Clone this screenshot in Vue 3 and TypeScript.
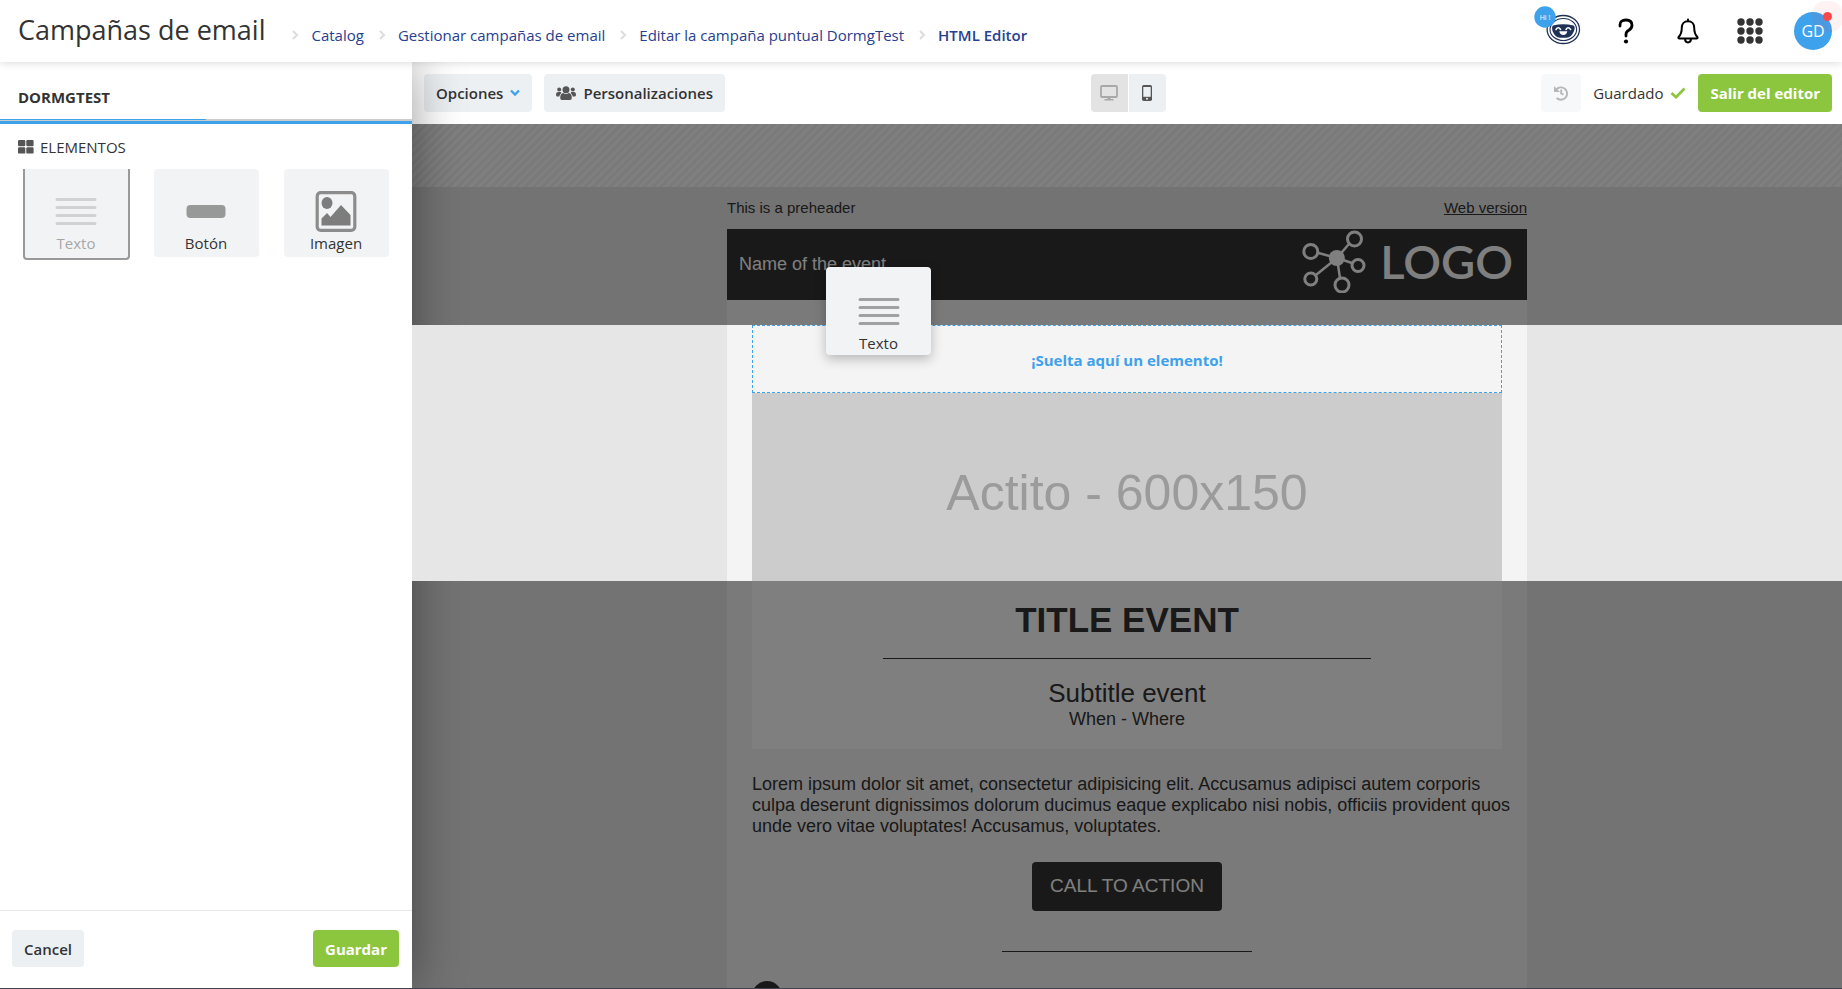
<script setup lang="ts">
interface Crumb { label: string; current?: boolean }
const crumbs: Crumb[] = [
  { label: 'Catalog' },
  { label: 'Gestionar campañas de email' },
  { label: 'Editar la campaña puntual DormgTest' },
  { label: 'HTML Editor', current: true },
]
interface Block { id: string; label: string; dragging?: boolean }
const blocks: Block[] = [
  { id: 'text', label: 'Texto', dragging: true },
  { id: 'button', label: 'Botón' },
  { id: 'image', label: 'Imagen' },
]
const gridDots = [0, 1, 2, 3, 4, 5, 6, 7, 8]
</script>

<template>
  <div class="app">
    <header class="topbar">
      <h1>Campañas de email</h1>
      <nav class="crumbs" aria-label="Ruta">
        <template v-for="c in crumbs" :key="c.label">
          <svg class="sep" viewBox="0 0 8 12" width="8" height="12"><path d="M2 2l4 4-4 4" /></svg>
          <a href="#" :class="{ current: c.current }">{{ c.label }}</a>
        </template>
      </nav>
      <div class="tools">
        <button class="tool bot" type="button" aria-label="Asistente">
          <svg viewBox="0 0 48 50" width="48" height="50">
            <g fill="none" stroke="#1f3157">
              <ellipse cx="30.300" cy="23.500" rx="16.200" ry="14" stroke-width="1.300" />
              <ellipse cx="30.300" cy="23.500" rx="13.300" ry="11" stroke-width="1.100" />
            </g>
            <path d="M20 19.500Q30 17 40.500 19.500 42.500 20.500 41 25 38.500 31.500 33.500 31.800h-6.500Q22 31.500 19.500 25 18.500 20.500 20 19.500z" fill="#1f3157" />
            <path d="M23 23.500q2.200-3.400 4.600 0M33 23.500q2.200-3.400 4.600 0" fill="none" stroke="#fff" stroke-width="1.500" stroke-linecap="round" />
            <path d="M26.300 25.300h8q-.6 3.700-4 3.700t-4-3.700z" fill="#fff" />
            <circle cx="12" cy="11" r="10.700" fill="#3ea1ec" />
            <text x="12" y="14" text-anchor="middle" font-size="7" fill="#fff">Hi !</text>
          </svg>
        </button>
        <button class="tool" type="button" aria-label="Ayuda">
          <svg viewBox="0 0 16 26" width="16" height="26"><path d="M2 8V7q0-5 6-5t6 5.200q0 3-3.200 5Q8 13.800 8 16.200V18" fill="none" stroke="#000" stroke-width="2.800" stroke-linecap="round" stroke-linejoin="round" /><circle cx="8" cy="23.500" r="2.100" /></svg>
        </button>
        <button class="tool" type="button" aria-label="Notificaciones">
          <svg viewBox="0 0 22 26" width="22" height="26"><path d="M11 1.500V3M11 3.200c-4 0-6.200 3-6.200 6.300 0 5.500-1.300 7.500-3 9.200-.8 1-.3 1.800.7 1.800h17c1 0 1.500-.8.700-1.800-1.700-1.700-3-3.700-3-9.200 0-3.300-2.200-6.300-6.200-6.300zM8 21c.2 4.500 5.800 4.500 6 0" fill="none" stroke="#000" stroke-width="2" stroke-linecap="round" stroke-linejoin="round" /></svg>
        </button>
        <button class="tool" type="button" aria-label="Aplicaciones">
          <svg viewBox="0 0 26 26" width="26" height="26" fill="#333"><circle v-for="d in gridDots" :key="d" :cx="4 + (d % 3) * 9" :cy="4 + Math.floor(d / 3) * 9" r="3.700" /></svg>
        </button>
        <button class="avatar" type="button">GD<span class="dot"></span></button>
      </div>
    </header>

    <div class="body">
      <aside class="panel">
        <div class="tab"><h2>DORMGTEST</h2></div>
        <h3>
          <svg viewBox="0 0 16 14" width="16" height="14" fill="#555"><rect width="7.300" height="6.300" rx="1.200" /><rect x="8.300" width="7.300" height="6.300" rx="1.200" /><rect y="7.300" width="7.300" height="6.300" rx="1.200" /><rect x="8.300" y="7.300" width="7.300" height="6.300" rx="1.200" /></svg>
          ELEMENTOS
        </h3>
        <div class="blocks">
          <div v-for="b in blocks" :key="b.id" class="card" :class="{ ghost: b.dragging }">
            <svg viewBox="0 0 42 42" width="42" height="42">
              <path v-if="b.id === 'text'" d="M2 9.500h38M2 17.500h38M2 25.500h38M2 33.500h38" stroke="#a1a1a1" stroke-width="3" stroke-linecap="round" />
              <rect v-else-if="b.id === 'button'" x="1.500" y="15" width="39" height="13" rx="4" fill="#979998" />
              <g v-else>
                <rect x="2.200" y="2.700" width="37.600" height="37.600" rx="3.500" fill="none" stroke="#8c8c8c" stroke-width="3.200" />
                <ellipse cx="12" cy="13" rx="5.500" ry="6" fill="#7d7d7d" />
                <path d="M6.500 35.500v-7l5.500-5.500 3.500 4L26 15l9.500 10V35.500z" fill="#7d7d7d" />
              </g>
            </svg>
            <span>{{ b.label }}</span>
          </div>
        </div>
        <footer class="actions">
          <button class="btn" type="button">Cancel</button>
          <button class="btn primary" type="button">Guardar</button>
        </footer>
      </aside>

      <main class="editor">
        <div class="toolbar">
          <div class="left">
            <button class="btn" type="button">Opciones
              <svg viewBox="0 0 10 8" width="10" height="8"><path d="M1 1.500L5 5.500 9 1.500" fill="none" stroke="#3ea1ec" stroke-width="2.300" /></svg>
            </button>
            <button class="btn" type="button">
              <svg viewBox="0 0 20 14" width="20" height="14" fill="#555"><circle cx="10" cy="3.700" r="3.500" /><circle cx="3.200" cy="3.500" r="2" /><circle cx="16.800" cy="3.500" r="2" /><path d="M4.200 12q0-4.500 3-5 2.800 2 5.600 0 3 .5 3 5 0 2-1.800 2H6q-1.800 0-1.800-2zM0 8.500Q0 6 1.800 6h3Q6 6.500 4.500 8 3.500 9 3.300 10.500H1Q0 10.500 0 8.500zM20 8.500Q20 6 18.200 6h-3Q14 6.500 15.500 8q1 1 1.200 2.500H19q1 0 1-2z" /></svg>
              Personalizaciones
            </button>
          </div>
          <div class="devices">
            <button class="device on" type="button" aria-label="Escritorio">
              <svg viewBox="0 0 18 16" width="18" height="16"><rect x="1" y="1" width="16" height="11" rx="1" fill="none" stroke="#a8a8a8" stroke-width="1.800" /><path d="M7.500 12h3v2h3v1.500h-9V14h3z" fill="#a8a8a8" /></svg>
            </button>
            <button class="device" type="button" aria-label="Móvil">
              <svg viewBox="0 0 10 16" width="10" height="16"><rect width="10" height="16" rx="1.800" fill="#555" /><rect x="1.300" y="2" width="7.400" height="9.800" fill="#edf0f3" /><circle cx="5" cy="13.700" r="1" fill="#edf0f3" /></svg>
            </button>
          </div>
          <div class="right">
            <button class="btn history" type="button" aria-label="Historial">
              <svg viewBox="0 0 16 16" width="16" height="16"><path d="M3 4.800A6.200 6.200 0 1 1 3.600 13M8.200 4.500v4l2.300 1.200" fill="none" stroke="#b5b7b9" stroke-width="1.900" /><path d="M1 1v6h6z" fill="#b5b7b9" /></svg>
            </button>
            <span class="saved">Guardado
              <svg viewBox="0 0 16 12" width="16" height="12"><path d="M1.500 6L6 10.200 14.500 1.500" fill="none" stroke="#8cc63e" stroke-width="2.700" /></svg>
            </span>
            <button class="btn primary" type="button">Salir del editor</button>
          </div>
        </div>

        <div class="canvas">
          <div class="stripes"></div>
          <div class="mail">
            <div class="preheader"><span>This is a preheader</span><a href="#">Web version</a></div>
            <div class="banner">
              <span>Name of the event</span>
              <div class="logo">
                <svg viewBox="0 0 64 64" width="64" height="64">
                  <g fill="none" stroke="#fff" stroke-width="2.500"><path d="M35 29L52 9M35 29L9 22M35 29l21 7M35 29L9 50M35 29l4 27" /></g>
                  <g fill="#333" stroke="#fff" stroke-width="3"><circle cx="52.500" cy="10" r="7" /><circle cx="8.800" cy="22.500" r="7" /><circle cx="56" cy="36.500" r="6" /><circle cx="8.800" cy="50" r="6" /><circle cx="40" cy="56" r="7" /></g>
                  <circle cx="34.800" cy="29" r="8" fill="#fff" />
                </svg>
                <b>LOGO</b>
              </div>
            </div>
            <div class="gap"></div>
          </div>
          <div class="spot">
            <div class="mail">
              <div class="drop">¡Suelta aquí un elemento!</div>
              <div class="picture">Actito - 600x150</div>
            </div>
            <div class="card drag">
              <svg viewBox="0 0 42 42" width="42" height="42"><path d="M2 9.500h38M2 17.500h38M2 25.500h38M2 33.500h38" stroke="#a1a1a1" stroke-width="3" stroke-linecap="round" /></svg>
              <span>Texto</span>
            </div>
          </div>
          <div class="mail">
            <section class="event">
              <h2>TITLE EVENT</h2>
              <hr>
              <p class="sub">Subtitle event</p>
              <p>When - Where</p>
            </section>
            <p class="lorem">Lorem ipsum dolor sit amet, consectetur adipisicing elit. Accusamus adipisci autem corporis culpa deserunt dignissimos dolorum ducimus eaque explicabo nisi nobis, officiis provident quos unde vero vitae voluptates! Accusamus, voluptates.</p>
            <a class="cta" href="#">CALL TO ACTION</a>
            <hr class="short">
            <span class="social"></span>
          </div>
        </div>
      </main>
    </div>
  </div>
</template>

<style>
body { margin: 0; }
</style>

<style scoped>
* { box-sizing: border-box; }
.app { height: 100vh; display: flex; flex-direction: column; overflow: hidden; font: 15px/20px "Open Sans", sans-serif; color: #333; background: #fff; border-bottom: 1px solid #3f4454; }
h1, h2, h3, p { margin: 0; }
button { font: inherit; color: inherit; border: 0; padding: 0; background: none; cursor: pointer; }
svg { display: block; flex: none; }
.topbar { position: relative; z-index: 5; flex: none; height: 62px; padding: 0 10px 0 18px; display: flex; align-items: center; background: #fff; box-shadow: 0 1px 8px rgba(0, 0, 0, .15); }
h1 { font-size: 27px; line-height: 36px; font-weight: 500; padding-bottom: 2px; }
.crumbs { display: flex; align-items: center; padding: 8px 0 0 26px; }
.crumbs a { color: #27408f; text-decoration: none; margin: 0 14px 0 12px; }
.crumbs .current { font-weight: 600; }
.sep path { fill: none; stroke: #ddd; stroke-width: 2; }
.tools { margin-left: auto; display: flex; align-items: center; gap: 27px; }
.tool { display: grid; place-items: center; min-width: 35px; }
.bot svg text { font-family: "Open Sans", sans-serif; }
.avatar { position: relative; width: 38px; height: 38px; border-radius: 50%; background: #3ea1ec; color: #fff; font-weight: 500; font-size: 16px; }
.dot { position: absolute; right: 0; top: 0; width: 9px; height: 9px; border-radius: 50%; background: #ff4747; box-shadow: 0 0 0 11px rgba(255, 71, 71, .07); }
.body { flex: 1; min-height: 0; display: flex; }
.panel { position: relative; z-index: 2; flex: none; width: 412px; display: flex; flex-direction: column; background: #fff; box-shadow: 0 0 48px rgba(0, 0, 0, .4); }
.tab { height: 62px; padding: 25px 18px 0; border-bottom: 3px solid #3ea1ec; background: linear-gradient(#3ea1ec, #3ea1ec) 0 57px / 50% 1px no-repeat, linear-gradient(#ccc, #ccc) 0 57px / 100% 2px no-repeat; }
.tab h2 { font-size: 15px; line-height: 20px; font-weight: 700; }
h3 { display: flex; align-items: center; gap: 6px; padding: 13px 18px 0; font-size: 15px; line-height: 20px; font-weight: 500; }
.blocks { display: grid; grid-template-columns: repeat(3, 1fr); justify-items: center; align-items: start; padding: 12px 11px; }
.card { width: 105px; height: 88px; padding-top: 21px; display: flex; flex-direction: column; align-items: center; gap: 1px; border-radius: 4px; background: #f1f3f5; }
.ghost { width: 107px; height: 91px; border: 2px solid #999; border-top: 0; border-radius: 0 0 4px 4px; }
.ghost > * { opacity: .4; }
.actions { margin-top: auto; height: 78px; padding: 0 13px 2px 12px; border-top: 1px solid #e6e8e8; display: flex; align-items: center; justify-content: space-between; }
.btn { display: inline-flex; align-items: center; justify-content: center; gap: 7px; height: 38px; padding: 0 12px; border-radius: 4px; background: #edf0f3; font-weight: 600; }
.actions .btn { height: 37px; }
.btn.primary { background: #8cc63e; color: #fff; font-weight: 700; }
.editor { flex: 1; min-width: 0; display: flex; flex-direction: column; }
.toolbar { flex: none; height: 62px; padding: 0 10px 0 12px; display: grid; grid-template-columns: 1fr auto 1fr; align-items: center; }
.left { display: flex; gap: 12px; }
.devices { display: flex; gap: 1px; }
.device { display: grid; place-items: center; width: 37px; height: 38px; background: #edf0f3; border-radius: 0 4px 4px 0; }
.device.on { background: #e3e3e3; border-radius: 4px 0 0 4px; }
.right { display: flex; justify-content: flex-end; align-items: center; gap: 12px; }
.history { width: 40px; background: #f7f8fa; }
.saved { display: flex; align-items: center; gap: 7px; }
.canvas { flex: 1; min-height: 0; overflow: hidden; background: #e6e6e6; font-family: "Liberation Sans", Arial, sans-serif; }
.stripes { height: 63px; background: repeating-linear-gradient(135deg, #fff 0 3px, #f4f4f4 3px 6px); }
.mail { width: 800px; margin: 0 auto; background: #f4f4f4; display: flow-root; }
.preheader { display: flex; align-items: center; justify-content: space-between; height: 42px; background: #e6e6e6; }
.preheader a { color: inherit; }
.banner { height: 71px; padding: 0 14px 2px 12px; display: flex; align-items: center; justify-content: space-between; background: #333; color: #fff; font-size: 18px; }
.logo { display: flex; align-items: center; gap: 14px; margin-bottom: 5px; }
.logo b { font: 600 47px/64px Lato, sans-serif; }
.gap { height: 25px; }
.spot { position: relative; z-index: 3; background: #e6e6e6; box-shadow: 0 0 0 2000px rgba(0, 0, 0, .5); }
.spot .mail { padding: 0 25px; }
.drop { height: 68px; padding-top: 2px; display: grid; place-items: center; border: 1px dashed #3ea1ec; font: 700 15px/20px "Open Sans", sans-serif; color: #3ea1ec; }
.picture { height: 188px; padding-top: 12px; display: grid; place-items: center; background: #ccc; color: #9b9b9b; font-size: 50px; }
.drag { position: absolute; left: calc(50% - 301px); top: -58px; padding-top: 23px; font: 15px/20px "Open Sans", sans-serif; box-shadow: 0 4px 12px rgba(0, 0, 0, .25); }
.event { margin: 0 25px; height: 168px; padding-top: 19px; background: #fff; text-align: center; font-size: 18px; line-height: 21px; }
.event h2 { font-size: 35px; line-height: 40px; }
hr { width: 488px; height: 1px; margin: 18px auto; border: 0; background: #333; }
.sub { font-size: 26px; line-height: 32px; }
.lorem { margin: 25px 15px 25px 25px; font-size: 18px; line-height: 21px; }
.cta { display: block; width: fit-content; margin: 0 auto; padding: 13px 18px 15px; border-radius: 4px; background: #333; color: #fff; font-size: 19px; line-height: 21px; text-decoration: none; }
.short { width: 250px; margin: 40px auto 29px; }
.social { display: block; width: 30px; height: 30px; margin-left: 25px; border-radius: 50%; background: #333; }
</style>
